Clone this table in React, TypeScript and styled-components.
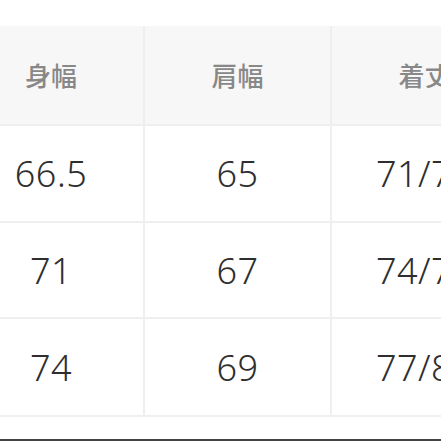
import React from 'react'
import styled, { createGlobalStyle } from 'styled-components'

const GlobalStyle = createGlobalStyle`
  html, body {
    margin: 0;
    padding: 0;
    background: #ffffff;
    overflow: hidden;
  }
`

const _Page = styled.div`
  width: 441px;
  height: 441px;
  display: flex;
  flex-direction: column;
  overflow: hidden;
  background: #ffffff;
  box-sizing: border-box;
  padding-top: 26px;
  border-bottom: 2px solid #454545;
`

const _Table = styled.div`
  display: grid;
  grid-template-columns: 184px 185px 185px;
  grid-template-rows: 98px 95px 94px 96px;
  gap: 2px;
  margin-left: -41px;
  width: max-content;
  background: #efefef;
  padding-bottom: 2px;
`

const _HeadCell = styled.div`
  display: flex;
  align-items: center;
  justify-content: center;
  background: #f7f7f7;
  color: #888888;
  font-family: 'Noto Sans CJK JP', 'Noto Sans', sans-serif;
  font-size: 26px;
  font-weight: 500;
  padding-bottom: 2px;
`

const _Cell = styled.div`
  display: flex;
  align-items: center;
  justify-content: center;
  background: #ffffff;
  color: #2e2e2e;
  font-family: 'Noto Sans', 'Liberation Sans', sans-serif;
  font-size: 36px;
  font-weight: 300;
  white-space: nowrap;
  overflow: hidden;
  letter-spacing: 0.5px;
`

const headers = ['身幅', '肩幅', '着丈']

const rows = [
  ['66.5', '65', '71/73'],
  ['71', '67', '74/76'],
  ['74', '69', '77/80'],
]

const App = () => {
  return (
    <>
      <GlobalStyle />
      <_Page>
        <_Table>
          {headers.map((h) => (
            <_HeadCell key={h}>{h}</_HeadCell>
          ))}
          {rows.map((row, i) =>
            row.map((v, j) => <_Cell key={`${i}-${j}`}>{v}</_Cell>),
          )}
        </_Table>
      </_Page>
    </>
  )
}

export default App
